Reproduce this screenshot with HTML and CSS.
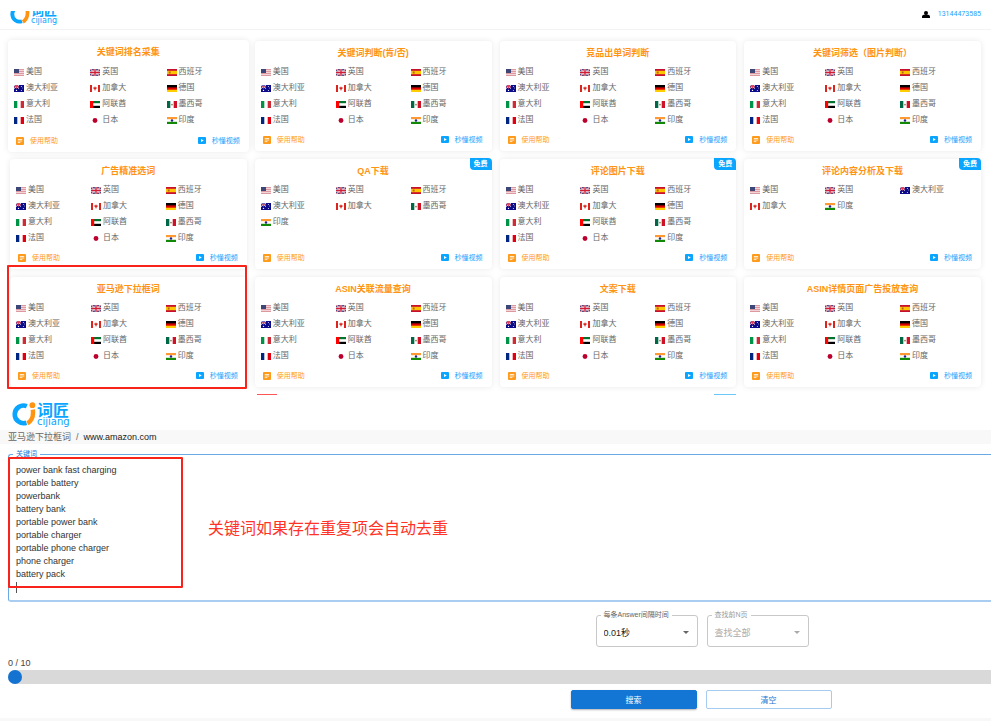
FILE: index.html
```html
<!DOCTYPE html>
<html lang="zh-CN">
<head>
<meta charset="utf-8">
<title>词匠</title>
<link rel="stylesheet" href="styles.css">
</head>
<body>
<svg class="sprite" aria-hidden="true">
  <symbol id="logo" viewBox="0 0 24 24">
    <path d="M14.8 4.2A8.800 8.800 0 1 0 14.4 20.700" fill="none" stroke="#0aa5ff" stroke-width="4.600"/>
    <path d="M20.8 7.6C21.6 13.5 20.4 18.6 15.4 21.4" fill="none" stroke="#ff9412" stroke-width="4.4"/>
    <circle cx="20.4" cy="3.2" r="2.9" fill="#ff9412"/>
  </symbol>
  <symbol id="user" viewBox="0 0 8 7">
    <circle cx="4" cy="2" r="2"/><path d="M0 7V5.400C0 4.200 1.200 3.400 4 3.400S8 4.200 8 5.400V7z"/>
  </symbol>
  <symbol id="note" viewBox="0 0 8 8">
    <rect width="8" height="8" rx="1" fill="#ff9b1a"/>
    <path d="M1.8 2.5h4.4M1.8 4h4.4M1.8 5.6h2.6" stroke="#fff" stroke-width=".8"/>
  </symbol>
  <symbol id="video" viewBox="0 0 8 7">
    <rect width="8" height="7" rx="1" fill="#0aa5ff"/><path d="M3 2l2.8 1.5L3 5z" fill="#fff"/>
  </symbol>
  <symbol id="us" viewBox="0 0 10 7">
    <rect width="10" height="7" fill="#f3d5d8"/>
    <path d="M0 .5h10M0 2.5h10M0 4.5h10M0 6.5h10" stroke="#d58a92" stroke-width=".8"/>
    <rect width="5" height="4" fill="#3c4778"/>
  </symbol>
  <symbol id="gb" viewBox="0 0 10 7">
    <rect width="10" height="7" fill="#2b3577"/>
    <path d="M0 0l10 7M10 0L0 7" stroke="#fff" stroke-width="1.4"/>
    <path d="M0 0l10 7M10 0L0 7" stroke="#d01c36" stroke-width=".6"/>
    <path d="M5 0v7M0 3.5h10" stroke="#fff" stroke-width="2.4"/>
    <path d="M5 0v7M0 3.5h10" stroke="#d01c36" stroke-width="1.4"/>
  </symbol>
  <symbol id="es" viewBox="0 0 10 7">
    <rect width="10" height="7" fill="#c8102e"/><rect y="1.8" width="10" height="3.4" fill="#ffc400"/>
    <rect x="1.8" y="2.5" width="1.8" height="2" fill="#b5602b"/>
  </symbol>
  <symbol id="au" viewBox="0 0 10 7">
    <rect width="10" height="7" fill="#0c0c8a"/>
    <path d="M0 0l5 3.5M5 0L0 3.5" stroke="#fff" stroke-width=".9"/>
    <path d="M2.5 0v3.5M0 1.8h5" stroke="#e0455b" stroke-width="1"/>
    <circle cx="2.5" cy="5.4" r=".7" fill="#fff"/><circle cx="7.4" cy="1.5" r=".5" fill="#fff"/>
    <circle cx="8.6" cy="3" r=".4" fill="#fff"/><circle cx="7.4" cy="5.5" r=".5" fill="#fff"/>
  </symbol>
  <symbol id="ca" viewBox="0 0 10 7">
    <rect width="10" height="7" fill="#fff"/>
    <path d="M0 0h2v7H0zM8 0h2v7H8z" fill="#d9251d"/>
    <path d="M5 1.2l.7 1.200 1.300.2-.8 1.500-.8.300v1.200h-.8v-1.200L3.800 4.100l-.8-1.500L4.300 2.400z" fill="#d9251d"/>
  </symbol>
  <symbol id="de" viewBox="0 0 10 7">
    <rect width="10" height="7" fill="#ffce00"/><rect width="10" height="4.700" fill="#d00"/><rect width="10" height="2.400" fill="#000"/>
  </symbol>
  <symbol id="it" viewBox="0 0 10 7">
    <rect width="10" height="7" fill="#fff"/><rect width="3.300" height="7" fill="#009246"/><rect x="6.700" width="3.300" height="7" fill="#ce2b37"/>
  </symbol>
  <symbol id="ae" viewBox="0 0 10 7">
    <rect width="10" height="7" fill="#fff"/><rect width="10" height="2.200" fill="#00732f"/><rect y="4.800" width="10" height="2.200" fill="#000"/><rect width="3.200" height="7" fill="#f00"/>
  </symbol>
  <symbol id="mx" viewBox="0 0 10 7">
    <rect width="10" height="7" fill="#fff"/><rect width="3.300" height="7" fill="#006847"/><rect x="6.700" width="3.300" height="7" fill="#ce1126"/><circle cx="5" cy="3.600" r=".9" fill="#9a7a50"/>
  </symbol>
  <symbol id="fr" viewBox="0 0 10 7">
    <rect width="10" height="7" fill="#fff"/><rect width="3.300" height="7" fill="#00267f"/><rect x="6.700" width="3.300" height="7" fill="#e1000f"/>
  </symbol>
  <symbol id="jp" viewBox="0 0 10 7">
    <rect width="10" height="7" fill="#fff"/><circle cx="5" cy="3.500" r="2.400" fill="#bc002d"/>
  </symbol>
  <symbol id="in" viewBox="0 0 10 7">
    <rect width="10" height="7" fill="#fff"/><rect width="10" height="2.200" fill="#ff9933"/><rect y="4.800" width="10" height="2.200" fill="#128807"/><circle cx="5" cy="3.500" r="1.200" fill="#22228f"/>
  </symbol>
</svg>

<div class="page">
  <header class="topbar">
    <div class="logo-window">
      <div class="logo logo-small">
        <svg class="logo-mark"><use href="#logo"/></svg>
        <div class="logo-words"><span class="logo-name">词匠</span><span class="logo-latin">cijiang</span></div>
      </div>
    </div>
    <a class="account" href="#"><svg class="user-icon"><use href="#user"/></svg>13144473585</a>
  </header>

  <main>
    <section class="board">
      <div class="cards" id="cards"></div>
      <div class="next-row"><span></span><span class="tab-hot"></span><span class="tab-free"></span><span></span></div>
    </section>

    <section class="tool">
      <div class="tool-head">
        <div class="logo">
          <svg class="logo-mark"><use href="#logo"/></svg>
          <div class="logo-words"><span class="logo-name">词匠</span><span class="logo-latin">cijiang</span></div>
        </div>
      </div>
      <nav class="crumbs"><span>亚马逊下拉框词</span><span>/</span><a href="#">www.amazon.com</a></nav>

      <div class="tool-body">
        <div class="keywords">
          <fieldset class="outline outline-active">
            <legend><label for="words">关键词</label></legend>
            <textarea id="words" rows="10" spellcheck="false">power bank fast charging
portable battery
powerbank
battery bank
portable power bank
portable charger
portable phone charger
phone charger
battery pack
</textarea>
          </fieldset>
          <span class="caret"></span>
          <span class="mark mark-words"></span>
          <p class="remark">关键词如果存在重复项会自动去重</p>
        </div>

        <div class="options">
          <fieldset class="outline">
            <legend><label for="gap">每条Answer间隔时间</label></legend>
            <select id="gap"><option>0.01秒</option></select>
            <svg class="arrow" viewBox="0 0 6 3"><path d="M0 0h6L3 3z"/></svg>
          </fieldset>
          <fieldset class="outline outline-off">
            <legend><label for="pages">查找前N页</label></legend>
            <select id="pages" disabled><option>查找全部</option></select>
            <svg class="arrow" viewBox="0 0 6 3"><path d="M0 0h6L3 3z"/></svg>
          </fieldset>
        </div>

        <div class="progress">
          <label for="done">0 / 10</label>
          <input id="done" type="range" min="0" max="10" value="0">
        </div>

        <div class="actions">
          <button class="btn btn-main" type="button">搜索</button>
          <button class="btn" type="button">清空</button>
        </div>
      </div>
    </section>
  </main>
  <footer class="foot"></footer>
</div>
<script src="script.js"></script>
</body>
</html>
```

FILE: styles.css
```css
* { box-sizing: border-box; }

body {
  margin: 0;
  background: #fff;
  color: #333;
  font-family: "Liberation Sans", "Noto Sans CJK SC", sans-serif;
  font-size: 9px;
}

a { color: inherit; text-decoration: none; }
button, select, textarea { font: inherit; color: inherit; }
.sprite { display: none; }
.page { margin-right: 9px; }

/* header */
.topbar {
  display: flex;
  justify-content: space-between;
  align-items: flex-start;
  padding: 11px 10px 4px;
  border-bottom: 1px solid #f3f3f3;
}
.logo-window { display: flex; align-items: flex-end; height: 14px; overflow: hidden; }
.logo { display: flex; align-items: center; gap: 1px; color: #0aa5ff; }
.logo-mark { width: 24px; height: 24px; flex: none; }
.logo-words { display: flex; flex-direction: column; }
.logo-name { font: bold 16px/16px "Noto Sans CJK SC", sans-serif; }
.logo-latin { font: 10px/10px "DejaVu Sans", sans-serif; }
.logo-small .logo-mark { width: 20px; height: 20px; }
.logo-small .logo-name { font-size: 13px; line-height: 14px; }
.logo-small .logo-latin { font-size: 8px; line-height: 8px; }
.account {
  display: flex;
  align-items: center;
  gap: 8px;
  color: #1e9fff;
  font-family: Roboto, sans-serif;
  font-size: 7px;
  line-height: 7px;
}
.user-icon { width: 8px; height: 7px; fill: #000; }

/* cards */
.board { padding: 11px 10px 0; overflow: hidden; }
.cards { display: grid; grid-template-columns: repeat(4, 1fr); gap: 8px; }
.card {
  position: relative;
  display: flex;
  flex-direction: column;
  min-height: 110px;
  padding: 5px 6px 3px;
  border-radius: 4px;
  background: #fff;
  box-shadow: 0 0 6px rgba(0, 0, 0, .09);
}
.card-raised { margin: -1px -2px; }
.card-raised h2 { margin-bottom: 5px; }
.card h2 {
  margin: 0 0 4px;
  color: #ff9412;
  font: bold 9px/14px "Liberation Sans", "Noto Sans CJK SC", sans-serif;
  text-align: center;
}
.card.card-raised h2 { margin-bottom: 5px; }
.sites {
  display: grid;
  grid-template-columns: repeat(3, 1fr);
  margin: 0;
  padding: 0;
  list-style: none;
  color: #666;
  font-size: 8px;
  line-height: 16px;
}
.sites li { display: flex; align-items: center; gap: 2px; }
.flag { width: 10px; height: 7px; margin-top: 1px; flex: none; }
.links {
  display: flex;
  justify-content: space-between;
  margin-top: auto;
  padding: 0 3px 0 2px;
  font-size: 7px;
  line-height: 17px;
}
.links a { display: flex; align-items: center; gap: 6px; }
.links svg { width: 8px; height: 7px; }
.links .help svg { height: 8px; }
.help { color: #ff9b1a; }
.video { color: #1e9fff; }
.badge {
  position: absolute;
  top: -1px;
  right: 0;
  padding: 0 4px;
  border-radius: 0 4px 0 4px;
  background: #0aa5ff;
  color: #fff;
  font-size: 7px;
  font-weight: bold;
  line-height: 12px;
}
.next-row { display: grid; grid-template-columns: repeat(4, 1fr); gap: 8px; height: 1px; margin-top: 7px; }
.tab-hot { width: 20px; margin-left: 2px; background: #f55; }
.tab-free { width: 22px; margin-left: auto; background: #6cc8fa; }

/* annotations */
.mark { position: absolute; border: 2px solid #f8241c; border-radius: 1px; pointer-events: none; }
.mark-card { top: -12px; right: 0; bottom: -2px; left: -3px; }
.mark-words { top: 7px; left: 0; width: 175px; height: 131px; }
.remark {
  position: absolute;
  top: 65px;
  left: 200px;
  margin: 0;
  color: #ff3328;
  font: 16px/24px "Noto Sans CJK SC", sans-serif;
}

/* tool */
.tool-head { padding: 6px 12px 3px; }
.crumbs {
  display: flex;
  gap: 5px;
  padding: 0 8px;
  background: #f8f8f8;
  color: #666;
  line-height: 14px;
}
.crumbs a { color: #222; }
.tool-body { padding-left: 8px; }
.outline {
  min-width: 0;
  margin: 0;
  padding: 0 4px;
  border: 1px solid #c8c8c8;
  border-radius: 3px;
  position: relative;
}
.outline legend { padding: 0 3px; color: #666; font-size: 7px; line-height: 8px; }
.outline legend label { display: block; }
.keywords { position: relative; margin-top: 6px; }
.outline-active {
  border-width: 1px 0 2px 1px;
  border-color: #6aaae4 transparent #a9cdf0 #6aaae4;
  border-radius: 3px 0 0 3px;
}
.outline-active legend { color: #1976d2; }
textarea {
  display: block;
  width: 100%;
  padding: 6px 3px;
  border: 0;
  outline: 0;
  resize: none;
  overflow: hidden;
  background: transparent;
  line-height: 13px;
}
.caret { position: absolute; top: 132px; left: 8px; width: 1px; height: 11px; background: #555; }

.options { display: flex; justify-content: center; gap: 9px; margin-top: 9px; padding-left: 413px; }
.options .outline { width: 102px; }
select {
  display: block;
  width: 100%;
  height: 27px;
  padding: 0 3px;
  border: 0;
  appearance: none;
  background: transparent;
  color: #222;
  opacity: 1;
}
.arrow { position: absolute; right: 8px; top: 12px; width: 6px; height: 3px; fill: #666; pointer-events: none; }
.outline-off legend { color: #999; }
.outline-off select { color: #aaa; }
.outline-off .arrow { fill: #aaa; }
.options { padding-left: 41%; margin-right: -2px; }

.progress { display: flex; flex-direction: column; margin-top: 10px; color: #444; line-height: 13px; }
.progress input {
  width: 100%;
  height: 14px;
  margin: 0;
  appearance: none;
  border-radius: 7px 0 0 7px;
  background: #d9d9d9;
}
.progress input::-webkit-slider-thumb {
  appearance: none;
  width: 14px;
  height: 14px;
  border-radius: 50%;
  background: #1473d0;
}

.actions { display: flex; justify-content: center; gap: 9px; margin-top: 6px; padding-left: 41%; }
.btn {
  width: 126px;
  height: 19px;
  padding: 0;
  border: 1px solid #a6cbf0;
  border-radius: 2px;
  background: #fff;
  color: #1976d2;
  font-size: 8px;
}
.btn-main { border-color: #1476d4; background: #1476d4; color: #fff; box-shadow: 0 1px 2px rgba(0, 0, 0, .3); }
.foot { height: 3px; margin-top: 9px; background: #f8f8f8; }
```

FILE: script.js
```js
const NAMES = {
  us: "美国", gb: "英国", es: "西班牙", au: "澳大利亚", ca: "加拿大", de: "德国",
  it: "意大利", ae: "阿联酋", mx: "墨西哥", fr: "法国", jp: "日本", in: "印度"
};
const ALL = ["us", "gb", "es", "au", "ca", "de", "it", "ae", "mx", "fr", "jp", "in"];

const CARDS = [
  { title: "关键词排名采集", raised: true },
  { title: "关键词判断(肯/否)" },
  { title: "竞品出单词判断" },
  { title: "关键词筛选（图片判断）" },
  { title: "广告精准选词" },
  { title: "QA下载", free: true, sites: ["us", "gb", "es", "au", "ca", "mx", "in"] },
  { title: "评论图片下载", free: true },
  { title: "评论内容分析及下载", free: true, sites: ["us", "gb", "au", "ca", "in"] },
  { title: "亚马逊下拉框词", marked: true },
  { title: "ASIN关联流量查询" },
  { title: "文案下载" },
  { title: "ASIN详情页面广告投放查询" }
];

document.getElementById("cards").innerHTML = CARDS.map(card => `
  <article class="card${card.raised ? " card-raised" : ""}">
    <h2>${card.title}</h2>
    <ul class="sites">${(card.sites || ALL).map(code =>
      `<li><svg class="flag"><use href="#${code}"/></svg>${NAMES[code]}</li>`).join("")}</ul>
    <div class="links">
      <a class="help" href="#"><svg><use href="#note"/></svg>使用帮助</a>
      <a class="video" href="#"><svg><use href="#video"/></svg>秒懂视频</a>
    </div>
    ${card.free ? '<span class="badge">免费</span>' : ""}
    ${card.marked ? '<span class="mark mark-card"></span>' : ""}
  </article>`).join("");
```
